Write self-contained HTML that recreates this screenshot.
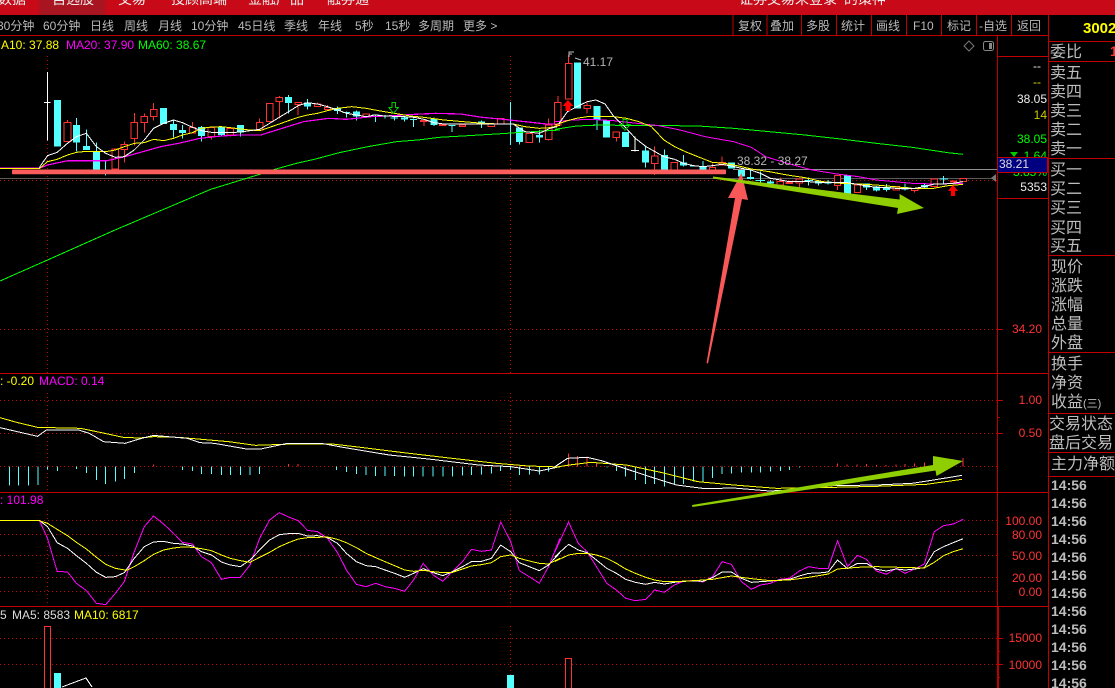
<!DOCTYPE html>
<html><head><meta charset="utf-8">
<style>
html,body{margin:0;padding:0;background:#000;width:1115px;height:688px;overflow:hidden}
svg{display:block;font-family:"Liberation Sans","WenQuanYi Zen Hei","Noto Sans CJK SC",sans-serif;font-size:12px}
.s *{vector-effect:non-scaling-stroke;fill:none;shape-rendering:crispEdges}
.tb text{fill:#b9b9b9}
.sd text{fill:#bdbdbd;font-size:16px}
.tm text{fill:#bdbdbd;font-size:14px;font-weight:bold}
.ax text{fill:#f33;text-anchor:end}
.vl text{text-anchor:end}
.top text{fill:#eee;font-size:14px}
</style></head><body>
<svg width="1115" height="688" viewBox="0 0 1115 688" xmlns="http://www.w3.org/2000/svg">
<rect width="1115" height="688" fill="#000"/>
<!-- top bar -->
<rect width="1115" height="15" fill="#c80a18"/>
<rect x="39" width="66" height="15" fill="#a81520"/>
<g class="top">
<text x="-2" y="4">数据</text><text x="52" y="4">自选股</text><text x="118" y="4">交易</text><text x="171" y="4">投顾高端</text><text x="248" y="4">金融产品</text><text x="327" y="4">融券通</text>
<text x="739" y="4">证券交易未登录</text><text x="844" y="4">的策神</text>
</g>
<!-- toolbar -->
<g class="tb">
<text x="-3" y="30">30分钟</text><text x="43" y="30">60分钟</text><text x="90" y="30">日线</text><text x="124" y="30">周线</text><text x="158" y="30">月线</text><text x="191" y="30">10分钟</text><text x="238" y="30">45日线</text><text x="284" y="30">季线</text><text x="318" y="30">年线</text><text x="355" y="30">5秒</text><text x="385" y="30">15秒</text><text x="418" y="30">多周期</text><text x="463" y="30">更多 &gt;</text>
<text x="738" y="30">复权</text><text x="770" y="30">叠加</text><text x="806" y="30">多股</text><text x="841" y="30">统计</text><text x="876" y="30">画线</text><text x="913" y="30">F10</text><text x="947" y="30">标记</text><text x="979" y="30">-自选</text><text x="1017" y="30">返回</text>
</g>
<!-- grid -->
<g class="s">
<path stroke="#c00000" stroke-width="1" d="M0 35.5H1048.5M0 373.5H1048M0 492.5H1048M0 606.5H1048M997.5 35V688M733 15V35M767 15V35M801.5 15V35M836.5 15V35M871.5 15V35M906.5 15V35M941.5 15V35M976.5 15V35M1011.5 15V35M1048.5 15V688M997.5 56.5H1048M997.5 198.5H1048M1048 41.5H1115M1048 61.5H1115M1048 158.5H1115M1048 255.5H1115M1048 352.5H1115M1048 413.5H1115M1048 452.5H1115M1048 476.5H1115"/>
<path stroke="#c00000" stroke-width="1" d="M998.5 606V688M997 329.5H1003M997 400.5H1003M997 417.5H1000M997 433.5H1003M997 638.5H1003M997 651.5H1000M997 664.5H1003M997 677.5H1000"/>
<path stroke="#c80000" stroke-width="1" stroke-dasharray="1 3" d="M0 180.5H997M0 329.5H997M0 400.5H997M0 433.5H997M0 466.5H997M0 520.5H997M0 534.5H997M0 555.5H997M0 577.5H997M0 591.5H997M0 638.5H997M0 664.5H997M47.5 56V373M510.5 56V373M47.5 393V490M510.5 393V490M47.5 510V605M510.5 510V605M47.5 626V688M510.5 626V688"/>
<path stroke="#5a5a5a" d="M0 178.5H995"/>
<path stroke="#909090" d="M733 169.5H997"/>
</g>
<polygon points="991,178 996,174 996,182" fill="#777"/>
<!-- main chart left segment -->
<g class="s" transform="scale(.35714,.33333)">
<path stroke="#fff" d="M133 216V422M123 307H141"/>
<path stroke="#54ffff" d="M214 354V455M242 388V450M270 428V510M296 480V527M486 358V412M511 375V415M564 378V425M620 378V410M673 375V410M808 285V340M861 297V328M945 320V342M970 335V352M960 337H980M998 332V362M1052 343V366M1042 345H1062M1078 345V355M1104 346V362M1094 354H1114M1133 350V365M1158 355V381M1148 358H1168M1215 352V378M1266 375V396M1256 376H1276M1348 362V384M1430 306V435M1454 382V434M1510 390V428"/>
<path stroke="#54ffff" stroke-width="7" d="M161 300V440M214 375V428M242 438V450M270 456V510M458 324V372M486 372V390M511 390V399M564 381V408M620 380V405M673 375V397M808 291V309M861 308V320M945 324V333M998 335V350M1133 352V358M1215 355V375M1348 365V372M1454 382V426M1510 405V413"/>
<path stroke="#ff3232" d="M189 360V367M348 425V488M376 339V437M404 340V398M430 309V362M539 366V382M592 380V418M645 385V410M727 355V392M782 288V355M835 308V345M889 308V319M917 315V332M1187 362V378M1240 370V378M1536 355V422M1562 288V308"/>
<path stroke="#ff3232" style="fill:#000" d="M179 367h20v58h-20zM314 447h18v60h-18zM339 433h18v16h-18zM367 367h18v48h-18zM395 349h18v19h-18zM421 328h18v21h-18zM530 382h18v17h-18zM583 382h18v28h-18zM636 385h18v20h-18zM718 367h18v23h-18zM746 310h18v55h-18zM773 292h18v12h-18zM826 308h18v5h-18zM880 312h18v7h-18zM908 322h18v7h-18zM1016 342h18v7h-18zM1178 362h18v3h-18zM1231 373h18v3h-18zM1286 375h18v5h-18zM1367 372h18v8h-18zM1393 356h18v16h-18zM1473 400h18v28h-18zM1527 375h18v43h-18zM1553 308h18v67h-18z"/>
<polyline stroke="#0f0" points="0,843 133,780 322,690 590,568 730,522 776,506 830,490 880,478 950,458 1030,440 1110,425 1170,420 1230,412 1310,407 1390,402 1460,397 1568,390"/>
<polyline stroke="#f0f" stroke-width="1.2" points="0,505 110,505 133,495 190,482 250,482 300,482 350,470 400,455 450,440 500,430 560,415 620,408 670,405 730,405 790,385 850,365 920,355 970,358 1040,350 1100,347 1160,343 1220,340 1290,342 1350,352 1410,358 1470,365 1530,372 1568,372"/>
<polyline stroke="#ff0" points="0,506 20,506 110,506 133,485 160,478 189,465 214,457 242,454 270,454 296,455 323,450 348,440 376,430 404,428 430,418 458,422 486,415 511,405 539,398 564,385 592,381 620,380 645,383 673,387 700,390 727,392 755,382 782,372 808,362 835,352 861,345 889,340 917,332 945,325 985,320 1025,325 1060,332 1104,340 1150,348 1187,352 1215,356 1243,360 1298,365 1354,370 1400,372 1437,372 1470,380 1510,385 1540,383 1568,376"/>
<polyline stroke="#fff" points="110,503 133,467 160,457 189,430 214,410 242,400 270,440 296,460 323,472 348,470 376,450 404,420 430,385 458,370 486,360 511,368 539,382 564,392 592,397 620,397 645,398 673,396 700,392 727,388 755,370 782,352 808,335 835,317 861,308 889,312 917,320 945,330 970,340 998,345 1025,350 1050,345 1078,348 1104,349 1132,350 1160,352 1187,358 1215,368 1243,372 1270,372 1298,372 1326,372 1354,372 1382,372 1410,372 1437,372 1470,395 1510,400 1540,385 1560,380"/>
<path stroke="#0c0" d="M1097 307h11v16h7l-13 17-13-17h8z"/>
</g>
<!-- main chart right segment -->
<g class="s" transform="translate(555,0) scale(.35714,.33333)">
<path stroke="#fff" d="M224 410V455M213 452H235"/>
<path stroke="#54ffff" d="M117 358V390M107 375H127M254 437V502M306 448V510M360 465V500M414 483V510M548 510V538M575 515V550M562 541H588M603 540V555M710 533V557M698 541H722M738 540V557M765 540V553M872 550V570M900 558V575M928 552V575M915 563H941M980 550V572M1034 550V565M1088 528V550M1076 537H1100"/>
<path stroke="#54ffff" stroke-width="7" d="M63 188V325M117 318V358M144 360V412M198 396V441M254 452V488M306 465V510M360 487V497M388 496V500M414 500V510M494 487V505M522 510V530M548 531V537M603 545V550M738 543V551M765 545V551M819 525V582M872 551V563M900 560V572M928 562V570M980 561V569M1034 555V563"/>
<path stroke="#ff3232" d="M38 165V190M90 305V340M172 413V424M279 440V525M468 470V488M631 533V560M684 537V565M791 527V570M1007 565V578M441 490V503"/>
<path stroke="#ff3232" style="fill:#000" d="M29 190h18v107h-18zM81 316h18v10h-18zM163 396h18v17h-18zM270 468h18v22h-18zM325 487h18v23h-18zM432 503h18v7h-18zM459 488h18v7h-18zM622 545h18v10h-18zM647 548h18v3h-18zM675 537h18v12h-18zM782 527h18v29h-18zM838 555h18v23h-18zM946 560h18v10h-18zM998 565h18v7h-18zM1053 537h18v23h-18zM1134 535h18v10h-18z"/>
<path stroke="#f33" stroke-width="2" d="M1106 544H1126"/>
<polyline stroke="#0f0" points="0,388 60,378 130,375 230,377 330,377 400,378 500,385 600,395 700,405 800,417 900,430 1000,442 1100,458 1143,463"/>
<polyline stroke="#f0f" points="0,365 50,360 100,358 165,362 230,370 290,377 350,390 420,410 500,425 550,442 590,470 650,490 720,510 790,522 850,530 900,540 1000,550 1060,552 1143,550"/>
<polyline stroke="#ff0" points="0,375 35,362 60,355 90,350 130,350 165,350 200,355 235,365 270,380 305,420 335,440 365,455 400,470 440,487 475,490 510,497 550,507 600,515 650,525 700,533 750,545 800,550 850,552 900,555 950,560 1000,565 1060,565 1100,557 1143,553"/>
<polyline stroke="#fff" points="10,372 35,335 65,318 90,305 115,300 140,312 165,350 195,380 225,415 255,440 280,455 305,470 335,478 360,490 388,497 414,500 441,497 468,493 494,498 522,505 548,510 575,520 603,535 631,540 656,545 684,545 710,545 738,547 765,547 791,548 819,548 847,553 872,558 900,562 928,563 955,565 980,565 1007,565 1034,560 1062,552 1088,552 1115,550 1143,545"/>
<path stroke="#0c0" d="M190 358h12v16h8l-14 17-14-17h8z"/>
</g>
<!-- arrows up red -->
<polygon points="568,100 573.5,106 570.5,106 570.5,111 565.5,111 565.5,106 562.5,106" fill="#f00"/>
<polygon points="953,185 958,191 955,191 955,196 951,191 951,196 951,191 948,191" fill="#f00"/>
<rect x="951" y="190" width="4" height="6" fill="#f00"/>
<!-- markers -->
<path d="M569 57V52h5M569 54h3M575 58l6 2" stroke="#bbb" fill="none"/>
<text x="583" y="66" fill="#b5b5b5">41.17</text>
<text x="737" y="165" fill="#b5b5b5">38.32 - 38.27</text>
<!-- pink bar -->
<rect x="12" y="169.5" width="714" height="4.8" rx="1" fill="#fb5c5c"/>
<!-- legends -->
<text x="-9" y="49" fill="#ff0">MA10: 37.88</text>
<text x="66" y="49" fill="#f0f">MA20: 37.90</text>
<text x="138" y="49" fill="#0f0">MA60: 38.67</text>
<path d="M969 41l5 5-5 5-5-5z" stroke="#777" fill="none"/>
<rect x="983.5" y="41.5" width="10" height="9" rx="2" stroke="#888" fill="none"/><rect x="989" y="43" width="3" height="6" fill="#888"/>
<!-- MACD -->
<text x="0" y="385" fill="#ff0">: -0.20</text><text x="39" y="385" fill="#f0f">MACD: 0.14</text>
<g class="s" transform="translate(0,370) scale(.35714,.33333)">
<path stroke="#54ffff" d="M26 289V347M52 289V347M80 289V347M107 289V345M133 289V298M161 289V303M214 289V297M242 289V309M270 289V330M296 289V342M323 289V335M348 289V327M376 289V309M511 289V300M539 289V303M564 289V312M592 289V312M620 289V315M645 289V315M673 289V315M700 289V315M727 289V312M942 289V300M970 289V306M998 289V312M1025 289V315M1052 289V318M1078 289V318M1105 289V318M1133 289V320M1158 289V320M1185 289V320M1213 289V320M1240 289V320M1267 289V320M1295 289V317M1320 289V315M1348 289V313M1376 289V310M1402 289V303M1430 289V300M1454 289V315M1482 289V313M1510 289V313M1536 289V305"/>
<path stroke="#f33" d="M430 289V283M808 289V282M835 289V282"/>
<polyline stroke="#ff0" points="0,143 50,158 105,172 225,175 280,187 345,202 390,204 430,200 500,202 640,215 715,226 820,222 930,222 1010,232 1130,248 1250,263 1390,280 1480,288 1568,291"/>
<polyline stroke="#fff" points="0,173 105,199 130,180 220,180 250,190 290,215 350,220 390,207 430,196 470,200 525,205 560,218 600,220 690,237 730,237 800,221 900,220 960,232 1090,255 1200,267 1340,285 1430,290 1510,303 1568,290"/>
</g>
<g class="s" transform="translate(555,370) scale(.35714,.33333)">
<path stroke="#54ffff" d="M145 289V293M172 289V303M198 289V320M225 289V330M254 289V342M279 289V342M306 289V350M334 289V345M360 289V342M388 289V334M414 289V334M441 289V324M468 289V312M494 289V310M522 289V308M550 289V308M575 289V308M603 289V305M631 289V303M656 289V300M684 289V293"/>
<path stroke="#f33" d="M38 289V250M63 289V258M90 289V260M116 289V278M764 289V288M791 289V280M818 289V284M845 289V284M872 289V282M900 289V285M927 289V285M955 289V283M980 289V282M1007 289V280M1034 289V277M1062 289V272M1088 289V270M1115 289V267M1143 289V264"/>
<polyline stroke="#ff0" points="0,292 40,285 100,277 200,285 300,308 400,335 500,345 620,355 780,352 900,349 1040,343 1140,328"/>
<polyline stroke="#fff" points="0,290 35,265 90,262 130,272 200,297 280,325 340,345 420,356 500,354 600,363 660,360 780,347 900,345 1000,340 1060,330 1140,316"/>
</g>
<!-- KDJ -->
<text x="0" y="504" fill="#f0f">: 101.98</text>
<g class="s" transform="translate(0,370) scale(.35714,.33333)">
<polyline stroke="#f0f" points="0,451 110,451 133,505 160,604 189,606 214,640 242,662 270,700 296,704 323,670 348,635 376,545 404,470 430,438 458,462 486,490 511,517 539,522 564,560 592,578 620,628 645,622 673,622 700,585 727,505 755,450 782,428 808,441 835,452 861,481 889,485 917,505 945,548 970,600 998,643 1025,650 1052,640 1078,650 1105,655 1133,664 1158,630 1185,580 1213,615 1240,634 1267,605 1295,575 1320,538 1348,544 1376,540 1402,456 1430,515 1454,602 1482,620 1510,640 1536,590 1568,505"/>
<polyline stroke="#fff" points="0,451 110,451 133,470 160,518 189,535 214,557 242,580 270,607 296,622 323,620 348,608 376,565 404,530 430,516 458,514 486,520 511,522 539,528 564,545 592,555 620,576 645,585 673,590 700,570 727,540 755,510 782,494 808,491 835,490 861,498 889,497 917,503 945,520 970,550 998,575 1025,587 1052,590 1078,600 1105,610 1133,622 1158,610 1185,596 1213,608 1240,617 1267,605 1295,590 1320,575 1348,574 1376,565 1402,525 1430,545 1454,578 1482,590 1510,602 1536,585 1568,548"/>
<polyline stroke="#ff0" points="0,451 110,452 133,460 160,478 189,497 214,517 242,537 270,562 296,583 323,595 355,601 376,590 404,572 430,553 458,540 486,534 511,531 539,532 564,536 592,542 620,555 645,565 673,572 700,577 727,562 755,547 782,530 808,518 835,507 861,503 889,502 917,501 945,508 970,518 998,533 1025,550 1052,563 1078,575 1105,587 1133,600 1158,604 1185,601 1213,605 1240,608 1267,607 1295,597 1320,588 1348,584 1376,578 1402,560 1430,555 1454,565 1482,573 1510,580 1536,582 1568,565"/>
</g>
<g class="s" transform="translate(555,370) scale(.35714,.33333)">
<polyline stroke="#f0f" points="0,545 38,456 65,520 90,545 116,590 145,640 172,660 198,685 225,692 254,688 279,660 306,667 334,645 360,634 388,631 414,636 441,620 468,575 494,583 522,635 550,658 575,645 603,640 631,628 656,625 684,603 710,590 738,595 765,595 791,512 819,590 847,556 872,568 900,603 928,613 955,595 980,610 1007,597 1034,582 1062,485 1088,467 1115,462 1143,448"/>
<polyline stroke="#fff" points="0,560 38,523 65,540 90,548 116,570 145,595 172,610 198,628 225,637 254,643 279,637 306,642 334,637 360,634 388,633 414,634 441,623 468,606 494,606 522,625 550,637 575,635 603,633 631,630 656,628 684,618 710,610 738,609 765,606 791,570 819,596 847,580 872,580 900,598 928,603 955,597 980,600 1007,597 1034,593 1062,545 1088,530 1115,518 1143,506"/>
<polyline stroke="#ff0" points="0,574 38,555 65,550 90,550 116,555 145,565 172,580 198,597 225,610 254,622 279,630 306,635 334,635 388,632 441,628 494,618 550,626 603,632 656,630 710,622 765,612 791,597 847,592 900,590 965,592 1034,594 1062,577 1088,557 1115,545 1143,536"/>
</g>
<!-- Volume -->
<text x="0" y="619" fill="#ddd">5</text><text x="12" y="619" fill="#ddd">MA5: 8583</text><text x="74" y="619" fill="#ff0">MA10: 6817</text>
<rect x="44.5" y="626.5" width="6" height="62" fill="#000" stroke="#ff3232"/>
<rect x="54" y="673" width="7" height="15" fill="#54ffff"/>
<rect x="507" y="675" width="7" height="13" fill="#54ffff"/>
<rect x="565.5" y="658.5" width="6" height="30" fill="#000" stroke="#ff3232"/>
<polyline points="62,687 86,678 92,687" fill="none" stroke="#fff" shape-rendering="crispEdges"/>
<!-- annotation arrows -->
<polygon points="706.5,363 735,198 728,198 741.5,173 748,200 742,199 708,363.5" fill="#f95858"/>
<polygon points="713,176.5 899.6,199.5 899.6,194 924,208 897,214 898,208 713,178.5" fill="#8fce00"/>
<polygon points="692,505 933,465 933,456 963,461 936.5,476 935.5,470.5 692.5,507" fill="#8fce00"/>
<!-- axis -->
<g class="vl">
<text x="1041" y="70" fill="#eee">--</text>
<text x="1041" y="86" fill="#dd0">--</text>
<text x="1047" y="103" fill="#eee">38.05</text>
<text x="1047" y="119" fill="#cc0">14</text>
<text x="1047" y="143" fill="#0f0">38.05</text>
<text x="1047" y="160" fill="#0f0">1.64</text>
<text x="1047" y="176" fill="#0f0">3.85%</text>
<text x="1047" y="191" fill="#eee">5353</text>
</g>
<polygon points="1010,152 1018,152 1014,157" fill="#0c0"/>
<rect x="997.5" y="157.5" width="50" height="15" fill="#000080" stroke="#c00000"/>
<text x="999" y="168" fill="#ddd">38.21</text>
<g class="ax">
<text x="1042" y="333">34.20</text>
<text x="1042" y="404">1.00</text><text x="1042" y="437">0.50</text>
<text x="1042" y="525">100.00</text><text x="1042" y="539">80.00</text><text x="1042" y="560">50.00</text><text x="1042" y="582">20.00</text><text x="1042" y="596">0.00</text>
<text x="1042" y="642">15000</text><text x="1042" y="669">10000</text><text x="1042" y="698">5000</text>
</g>
<!-- right side -->
<text x="1083" y="33" fill="#ff0" font-weight="bold" font-size="15">3002</text>
<text x="1110" y="56" fill="#f33" font-size="14" font-weight="bold">1</text>
<g class="sd">
<text x="1050" y="57">委比</text>
<text x="1050" y="78">卖五</text><text x="1050" y="97">卖四</text><text x="1050" y="116">卖三</text><text x="1050" y="135">卖二</text><text x="1050" y="154">卖一</text>
<text x="1050" y="175">买一</text><text x="1050" y="194">买二</text><text x="1050" y="213">买三</text><text x="1050" y="233">买四</text><text x="1050" y="251">买五</text>
<text x="1051" y="272">现价</text><text x="1051" y="291">涨跌</text><text x="1051" y="310">涨幅</text><text x="1051" y="329">总量</text><text x="1051" y="348">外盘</text>
<text x="1051" y="369">换手</text><text x="1051" y="388">净资</text><text x="1051" y="407">收益<tspan font-size="11">(三)</tspan></text>
<text x="1049" y="429">交易状态</text><text x="1049" y="448">盘后交易</text>
<text x="1051" y="469">主力净额</text>
</g>
<g class="tm">
<text x="1051" y="490">14:56</text><text x="1051" y="508">14:56</text><text x="1051" y="526">14:56</text><text x="1051" y="544">14:56</text><text x="1051" y="562">14:56</text><text x="1051" y="580">14:56</text><text x="1051" y="598">14:56</text><text x="1051" y="616">14:56</text><text x="1051" y="634">14:56</text><text x="1051" y="652">14:56</text><text x="1051" y="670">14:56</text><text x="1051" y="688">14:56</text>
</g>
</svg>
</body></html>
